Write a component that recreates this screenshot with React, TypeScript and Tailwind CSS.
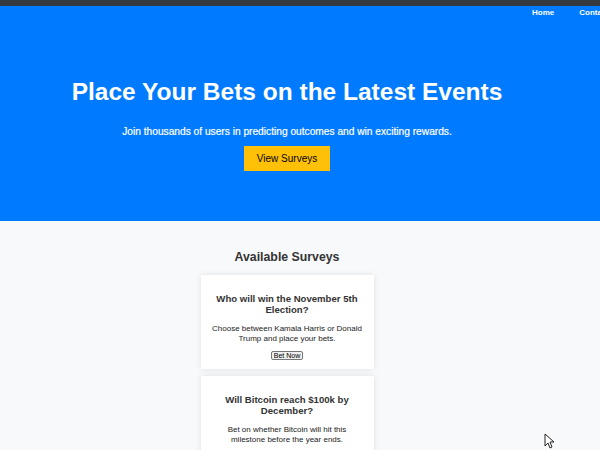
import React from 'react';

const surveys = [
  {
    title: 'Who will win the November 5th Election?',
    text: 'Choose between Kamala Harris or Donald Trump and place your bets.',
  },
  {
    title: 'Will Bitcoin reach $100k by December?',
    text: 'Bet on whether Bitcoin will hit this milestone before the year ends.',
  },
];

const App = () => {
  return (
    <div className="w-[600px] h-[450px] overflow-hidden bg-[#f8f9fa] relative font-['Liberation_Sans',Arial,sans-serif]">
      <header className="h-[6px] bg-[#343a40]"></header>
      <section className="bg-[#007bff] h-[215px] flex flex-col">
        <nav className="flex justify-end gap-[25px] mr-[-9px] pt-[1px] text-[8px] font-bold text-white leading-[12px]">
          <a>Home</a>
          <a>Contact</a>
        </nav>
        <div className="w-[574px] flex flex-col items-center text-white">
          <h1 className="mt-[59px] text-[24.5px] font-bold leading-[28px]">Place Your Bets on the Latest Events</h1>
          <p className="mt-[20px] text-[10.2px] leading-[12px] text-white [-webkit-text-stroke:0.2px_white]">
            Join thousands of users in predicting outcomes and win exciting rewards.
          </p>
          <button className="mt-[8px] w-[86px] h-[25px] bg-[#ffc107] text-black text-[10px]">View Surveys</button>
        </div>
      </section>
      <section className="w-[574px] flex flex-col items-center">
        <h2 className="mt-[28px] text-[12.3px] font-bold text-[#333] leading-[16px]">Available Surveys</h2>
        <div className="mt-[10px] flex flex-col gap-[7px]">
          {surveys.map((s) => (
            <div key={s.title} className="w-[173px] bg-white shadow-[0_0_6px_rgba(0,0,0,0.1)] px-[10px] pt-[18px] pb-[9px] text-center">
              <h3 className="text-[9.6px] font-bold text-[#333] leading-[11px]">{s.title}</h3>
              <p className="mt-[9px] text-[8px] text-[#222] leading-[10px]">{s.text}</p>
              <button className="block mx-auto mt-[7px] w-[32px] h-[9px] text-[7px] leading-[7px] bg-[#efefef] border border-[#767676] rounded-[2px] text-black">Bet Now</button>
            </div>
          ))}
        </div>
      </section>
      <svg className="absolute left-[544px] top-[433px]" width="11" height="16" viewBox="0 0 11 16">
        <path d="M1 1 L1 13 L4 10 L6 15 L8 14 L6 9 L10 9 Z" fill="white" stroke="#222" strokeWidth="1" strokeLinejoin="round" />
      </svg>
    </div>
  );
};

export default App;
